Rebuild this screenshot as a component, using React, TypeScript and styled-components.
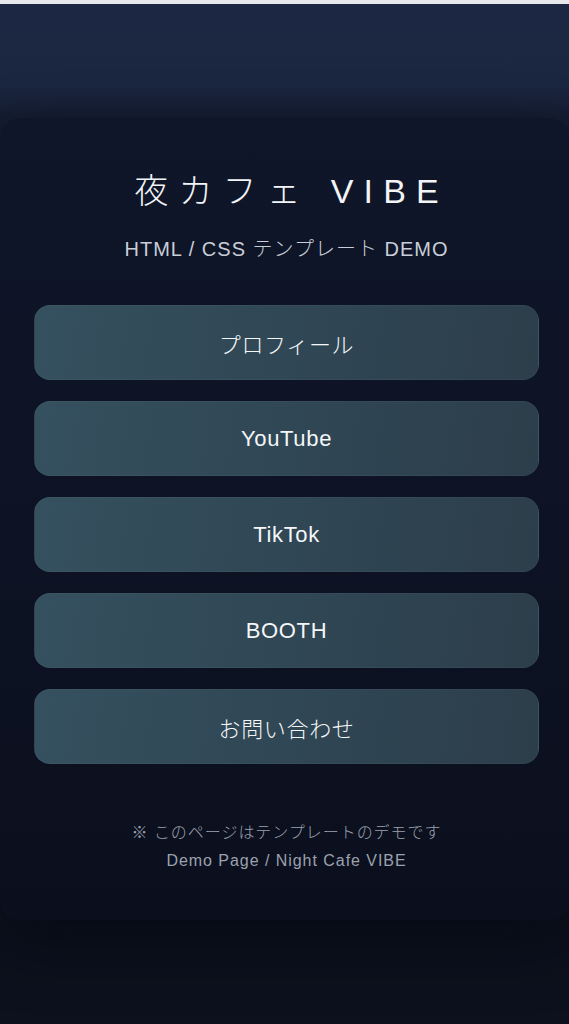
import React from "react";
import styled, { createGlobalStyle } from "styled-components";

const Global = createGlobalStyle`
  html, body {
    margin: 0;
    padding: 0;
    min-height: 100%;
    background: #0c111d;
  }
  body {
    font-family: "Liberation Sans", "Noto Sans CJK JP", sans-serif;
    -webkit-font-smoothing: antialiased;
  }
`;

const Page = styled.div`
  min-height: 1024px;
  box-sizing: border-box;
  border-top: 4px solid #e6e8ec;
  padding-top: 114px;
  background: linear-gradient(180deg, #1c2843 0px, #1b2640 80px, #141c31 114px, #0d1322 400px, #0c111d 1024px);
  overflow: hidden;
`;

const Card = styled.main`
  box-sizing: border-box;
  border-radius: 20px;
  padding: 53px 30px 45px 34px;
  background: linear-gradient(180deg, #0f1629 0%, #0d1324 50%, #0b0f1d 100%);
  box-shadow: 0 24px 60px rgba(4, 6, 12, 0.55);
  display: flex;
  flex-direction: column;
  align-items: stretch;
`;

const Title = styled.h1`
  margin: 0;
  text-align: center;
  color: #f2f4f7;
  font-size: 34px;
  line-height: 41px;
  font-weight: 300;
  letter-spacing: 0.3em;
  padding-left: 0.3em;
`;

const Subtitle = styled.p`
  margin: 25px 0 0;
  text-align: center;
  color: #c9ced8;
  font-size: 20px;
  line-height: 24px;
  font-weight: 300;
  letter-spacing: 0.05em;
`;

const LinkList = styled.nav`
  margin-top: 44px;
  display: flex;
  flex-direction: column;
  gap: 21px;
`;

const LinkButton = styled.a`
  display: flex;
  align-items: center;
  justify-content: center;
  height: 75px;
  box-sizing: border-box;
  border-radius: 16px;
  border: 1px solid rgba(255, 255, 255, 0.035);
  background: linear-gradient(100deg, #35505f 0%, #304755 50%, #2c3e4a 100%);
  color: #f4f6f8;
  font-size: 22px;
  font-weight: 300;
  text-decoration: none;
  letter-spacing: 0.03em;
`;

const Footer = styled.footer`
  margin-top: 55px;
  text-align: center;
  color: #9ba2ae;
  font-size: 16px;
  line-height: 28px;
  font-weight: 300;
  letter-spacing: 0.06em;
`;

const links = ["プロフィール", "YouTube", "TikTok", "BOOTH", "お問い合わせ"];

export default function App() {
  return (
    <>
      <Global />
      <Page>
        <Card>
          <Title>夜カフェ VIBE</Title>
          <Subtitle>HTML / CSS テンプレート DEMO</Subtitle>
          <LinkList>
            {links.map((l) => (
              <LinkButton key={l} href="#">
                {l}
              </LinkButton>
            ))}
          </LinkList>
          <Footer>
            <div>※ このページはテンプレートのデモです</div>
            <div>Demo Page / Night Cafe VIBE</div>
          </Footer>
        </Card>
      </Page>
    </>
  );
}
